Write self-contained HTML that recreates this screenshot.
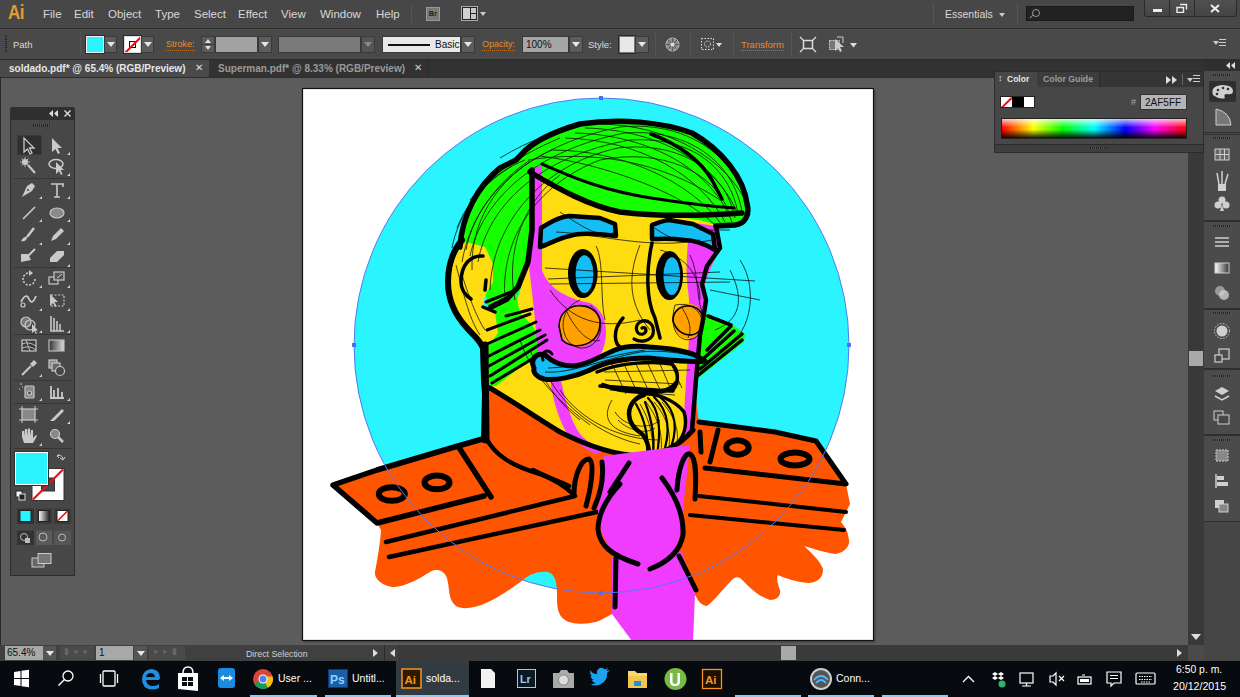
<!DOCTYPE html>
<html><head><meta charset="utf-8">
<style>
*{margin:0;padding:0;box-sizing:border-box}
html,body{width:1240px;height:697px;overflow:hidden;background:#5c5c5c;font-family:"Liberation Sans",sans-serif;}
.a{position:absolute}
.t{position:absolute;white-space:nowrap}
#menubar{left:0;top:0;width:1240px;height:29px;background:#474747;border-bottom:1px solid #2b2b2b}
.mi{position:absolute;top:8px;font-size:11.5px;color:#d8d8d8}
#ctrl{left:0;top:29px;width:1240px;height:31px;background:#494949;border-top:1px solid #505050;border-bottom:1px solid #2b2b2b}
.dd{position:absolute;background:#5c5c5c;border:1px solid #3a3a3a}
.dd:after{content:"";position:absolute;left:50%;top:50%;margin-left:-4px;margin-top:-2px;border-left:4px solid transparent;border-right:4px solid transparent;border-top:5px solid #e6e6e6}
.dd.g:after{border-top-color:#8a8a8a}
.sep{position:absolute;width:1px;background:#3a3a3a;border-right:1px solid #555}
.or{color:#e8892b;border-bottom:1px dotted #c07020}
#tabs{left:0;top:60px;width:1204px;height:17px;background:#323232}
#canvas{left:0;top:77px;width:1188px;height:568px;background:#5c5c5c}
#status{left:0;top:645px;width:1240px;height:16px;background:#404040}
#taskbar{left:0;top:661px;width:1240px;height:36px;background:#070a0e}
.tool{position:absolute;width:18px;height:18px}
.dock{position:absolute;left:1204px;width:36px;background:#4b4b4b;border-top:1px solid #2f2f2f;border-bottom:1px solid #2f2f2f}
.grip{position:absolute;height:3px;background:repeating-linear-gradient(90deg,#222 0 1px,#555 1px 2px)}
</style></head><body>
<div id="menubar" class="a">
  <div class="t" style="left:8px;top:1px;font-size:20px;font-weight:bold;color:#e39c30;letter-spacing:-0.5px;transform:scale(0.85,1);transform-origin:0 0">Ai</div>
  <div class="mi" style="left:43px">File</div>
  <div class="mi" style="left:74px">Edit</div>
  <div class="mi" style="left:108px">Object</div>
  <div class="mi" style="left:155px">Type</div>
  <div class="mi" style="left:194px">Select</div>
  <div class="mi" style="left:238px">Effect</div>
  <div class="mi" style="left:281px">View</div>
  <div class="mi" style="left:320px">Window</div>
  <div class="mi" style="left:376px">Help</div>
  <div class="sep" style="left:411px;top:5px;height:18px"></div>
  <div class="a" style="left:426px;top:7px;width:14px;height:14px;background:#7a7a7a;border:1px solid #999;font-size:7.5px;font-weight:bold;color:#222;text-align:center;line-height:12px">Br</div>
  <svg class="a" style="left:461px;top:6px" width="18" height="16"><rect x="0.5" y="0.5" width="16" height="14" fill="#222" stroke="#aaa"/><rect x="2" y="2" width="7" height="11" fill="#d0d0d0"/><rect x="10" y="2" width="5" height="5" fill="#c8c8c8"/><rect x="10" y="8" width="5" height="5" fill="#c8c8c8"/></svg>
  <div class="a" style="left:480px;top:12px;border-left:3px solid transparent;border-right:3px solid transparent;border-top:4px solid #ccc"></div>
  <div class="sep" style="left:933px;top:3px;height:22px"></div>
  <div class="mi" style="left:945px;font-size:10.5px;top:8px">Essentials</div>
  <div class="a" style="left:999px;top:13px;border-left:3px solid transparent;border-right:3px solid transparent;border-top:4px solid #ccc"></div>
  <div class="sep" style="left:1017px;top:3px;height:22px"></div>
  <div class="a" style="left:1026px;top:6px;width:108px;height:15px;background:#222;border:1px solid #1a1a1a">
    <div class="a" style="left:5px;top:2px;width:8px;height:8px;border:1px solid #999;border-radius:50%"></div>
    <div class="a" style="left:2px;top:9px;width:5px;height:1px;background:#999;transform:rotate(-45deg)"></div>
  </div>
  <div class="a" style="left:1144px;top:0;width:93px;height:17px;background:linear-gradient(#505050,#444);border:1px solid #2a2a2a;border-top:0;border-radius:0 0 3px 3px"></div>
  <div class="a" style="left:1169px;top:0;width:1px;height:16px;background:#2a2a2a"></div>
  <div class="a" style="left:1194px;top:0;width:1px;height:16px;background:#2a2a2a"></div>
  <div class="a" style="left:1153px;top:9px;width:9px;height:3px;background:#eee"></div>
  <svg class="a" style="left:1176px;top:3px" width="12" height="10"><path d="M4 1.5h6.5v5M1 4.5h6.5v5h-6.5z" fill="none" stroke="#eee" stroke-width="1.4"/></svg>
  <svg class="a" style="left:1210px;top:4px" width="10" height="9"><path d="M1 1 L9 8 M9 1 L1 8" stroke="#eee" stroke-width="2"/></svg>
</div>
<div id="ctrl" class="a"><div class="a" style="left:0;top:-1.5px;width:1240px;height:30px">
  <div class="a" style="left:5px;top:6px;width:2px;height:17px;background:repeating-linear-gradient(180deg,#222 0 1px,#4a4a4a 1px 2px)"></div>
  <div class="t" style="left:13px;top:10px;font-size:9.5px;color:#dadada">Path</div>
  <div class="sep" style="left:80px;top:3px;height:24px"></div>
  <div class="a" style="left:86px;top:7px;width:18px;height:17px;background:#2af5ff;border:1px solid #f0f0f0;outline:1px solid #2a2a2a"></div>
  <div class="dd" style="left:104px;top:7px;width:13px;height:17px"></div>
  <div class="a" style="left:124px;top:7px;width:17px;height:17px;background:#fff;border:1px solid #ddd;outline:1px solid #2a2a2a;overflow:hidden">
    <div class="a" style="left:4px;top:4px;width:7px;height:7px;border:1px solid #111"></div>
    <div class="a" style="left:-3px;top:7px;width:22px;height:2px;background:#e01010;transform:rotate(-45deg)"></div>
  </div>
  <div class="dd" style="left:141px;top:7px;width:13px;height:17px"></div>
  <div class="t or" style="left:166px;top:10px;font-size:9px;line-height:11px">Stroke:</div>
  <div class="a" style="left:201px;top:7px;width:14px;height:17px;background:#5a5a5a;border:1px solid #3a3a3a">
    <div class="a" style="left:3px;top:2px;border-left:3px solid transparent;border-right:3px solid transparent;border-bottom:4px solid #ddd"></div>
    <div class="a" style="left:0;top:7px;width:12px;height:1px;background:#3a3a3a"></div>
    <div class="a" style="left:3px;top:9px;border-left:3px solid transparent;border-right:3px solid transparent;border-top:4px solid #ddd"></div>
  </div>
  <div class="a" style="left:215px;top:7px;width:43px;height:17px;background:#a2a2a2;border:1px solid #3a3a3a"></div>
  <div class="dd" style="left:258px;top:7px;width:14px;height:17px"></div>
  <div class="a" style="left:278px;top:7px;width:83px;height:17px;background:#7a7a7a;border:1px solid #3a3a3a"></div>
  <div class="dd g" style="left:361px;top:7px;width:14px;height:17px;background:#555"></div>
  <div class="a" style="left:382px;top:7px;width:79px;height:17px;background:#e8e8e8;border:1px solid #3a3a3a">
    <div class="a" style="left:5px;top:7px;width:42px;height:2px;background:#111"></div>
    <div class="t" style="left:52px;top:2px;font-size:10px;color:#111">Basic</div>
  </div>
  <div class="dd" style="left:461px;top:7px;width:14px;height:17px"></div>
  <div class="t or" style="left:482px;top:10px;font-size:9px;line-height:11px">Opacity:</div>
  <div class="a" style="left:522px;top:7px;width:47px;height:17px;background:#a6a6a6;border:1px solid #3a3a3a"><div class="t" style="left:3px;top:2px;font-size:10px;color:#111">100%</div></div>
  <div class="dd" style="left:569px;top:7px;width:14px;height:17px"></div>
  <div class="t" style="left:588px;top:10px;font-size:9.5px;color:#dadada">Style:</div>
  <div class="a" style="left:619px;top:7px;width:16px;height:17px;background:#e8e8e8;border:1px solid #777;outline:1px solid #2a2a2a"></div>
  <div class="dd" style="left:635px;top:7px;width:14px;height:17px"></div>
  <div class="sep" style="left:655px;top:3px;height:24px"></div>
  <svg class="a" style="left:664px;top:7px" width="18" height="17"><circle cx="8.5" cy="8.5" r="6.5" fill="#8a8a8a" stroke="#bbb" stroke-width="1"/><path d="M8.5 2v13M2 8.5h13M4 4l9 9M13 4l-9 9" stroke="#5a5a5a" stroke-width="1"/><circle cx="8.5" cy="8.5" r="2" fill="#ddd"/></svg>
  <div class="sep" style="left:690px;top:3px;height:24px"></div>
  <svg class="a" style="left:700px;top:7px" width="24" height="17"><rect x="1.5" y="2.5" width="12" height="11" fill="none" stroke="#ddd" stroke-dasharray="1.5 1.5"/><circle cx="7.5" cy="8" r="3" fill="none" stroke="#ddd" stroke-dasharray="1.5 1"/><path d="M16 7h6l-3 4z" fill="#ddd"/></svg>
  <div class="sep" style="left:733px;top:3px;height:24px"></div>
  <div class="t or" style="left:741px;top:10px;font-size:9.5px;line-height:11px">Transform</div>
  <div class="sep" style="left:791px;top:3px;height:24px"></div>
  <svg class="a" style="left:799px;top:7px" width="18" height="17"><rect x="4.5" y="4.5" width="9" height="8" fill="none" stroke="#ddd" stroke-width="1.5"/><path d="M1 1l3 3M17 1l-3 3M1 16l3-3M17 16l-3-3" stroke="#ddd" stroke-width="1.2"/></svg>
  <svg class="a" style="left:827px;top:6px" width="32" height="18"><rect x="2.5" y="5.5" width="10" height="9" fill="#777" stroke="#ccc" stroke-dasharray="2 1"/><path d="M8 4 L8 16 L11 13 L13 17 L15 16 L13 12 L17 12Z" fill="#ccc"/><path d="M10 2l6 0M16 2l0 6" stroke="#ccc" stroke-width="1"/><path d="M23 8h7l-3.5 4.5z" fill="#ddd"/></svg>
  <div class="a" style="left:1213px;top:12px;border-left:3px solid transparent;border-right:3px solid transparent;border-top:4px solid #ccc"></div>
  <div class="a" style="left:1219px;top:10px;width:7px;height:9px;background:repeating-linear-gradient(180deg,#ccc 0 1px,transparent 1px 3px)"></div>
</div></div>
<div id="tabs" class="a">
  <div class="a" style="left:0;top:0;width:209px;height:17px;background:#4a4a4a"></div>
  <div class="t" style="left:9px;top:3px;font-size:10px;font-weight:bold;color:#e6e6e6">soldado.pdf* @ 65.4% (RGB/Preview)</div>
  <div class="t" style="left:195px;top:2px;font-size:10px;color:#ddd">&#x2715;</div>
  <div class="t" style="left:218px;top:3px;font-size:10px;font-weight:bold;color:#9a9a9a">Superman.pdf* @ 8.33% (RGB/Preview)</div>
  <div class="t" style="left:414px;top:2px;font-size:10px;color:#ccc">&#x2715;</div>
  <div class="a" style="left:427px;top:0;width:1px;height:17px;background:#2a2a2a"></div>
</div>
<div class="a" style="left:1204px;top:60px;width:36px;height:10px;background:#2f2f2f"><svg class="a" style="left:22px;top:2px" width="10" height="7"><path d="M4 0 L0 3.5 L4 7Z M9 0 L5 3.5 L9 7Z" fill="#ddd"/></svg></div>
<div id="canvas" class="a"><div class="a" style="left:0;top:0;width:1188px;height:1px;background:#2e2e2e"></div><div class="a" style="left:0;top:0;width:1px;height:568px;background:#2a2a2a"></div></div>
<div class="a" style="left:304px;top:90px;width:572px;height:553px;background:#4d4d4d"></div>
<svg class="a" style="left:295px;top:80px" width="590" height="565" viewBox="295 80 590 565">
<defs><clipPath id="ab"><rect x="303" y="89" width="570" height="551"/></clipPath></defs>
<rect x="302.5" y="88.5" width="571" height="552" fill="#fff" stroke="#111" stroke-width="1.2"/>
<g clip-path="url(#ab)">
 <circle cx="601.5" cy="345.5" r="247.5" fill="#2af5ff"/>
 <!-- orange jacket -->
 <path fill="#ff5400" d="M486 388 L484 438 L458 446 L377 470 L333 485 L377 523 L381 530 C380 545 378 555 375 572 C374 580 385 587 394 587 C405 587 420 578 430 572 C436 568 444 570 447 578 C450 590 448 600 456 606 C462 610 475 608 486 603 C500 597 512 588 523 580 C530 574 538 571 548 572 C556 574 557 585 557 595 C557 605 557 615 565 620 C572 625 590 625 601 620 L612 614 L695 595 C698 600 700 605 707 606 C715 600 722 590 730 582 C733 578 737 576 740 578 C748 585 755 595 770 600 C778 600 781 595 780 590 C778 585 776 578 778 575 C785 578 795 582 809 583 C818 582 823 578 823 569 C820 560 810 552 804 546 C812 548 825 553 836 554 C846 552 850 545 849 540 C848 532 846 528 841 522 L850 504 L846 484 L816 441 L775 432 L699 422 L696 400 L640 420 Z"/>
 <!-- tie lower -->
 <path fill="#ef3cff" d="M612 558 L682 552 L695 593 L693 641 L632 641 L612 614 Z"/>
 <!-- green hair + sideburn + hatch -->
 <path fill="#16ff00" d="M460 247 C462 215 478 186 500 168 L516 160 L520 156 C528 146 546 134 580 124 C620 118 662 122 692 133 C722 150 744 178 747 204 C750 215 745 224 735 225 L716 228 L700 240 L600 240 L540 270 L521 288 L516 300 L487 300 L485 290 Z"/>
 <path fill="#16ff00" d="M706 314 L731 324 L745 334 L744 342 L696 380 L700 340 Z"/>
 <!-- face yellow -->
 <path fill="#ffdc10" d="M533 168 C560 190 590 206 620 212 C660 217 700 216 716 226 L720 248 L709 272 L702 292 L706 315 L700 335 L695 380 L692 430 C680 445 660 456 640 456 C610 455 580 440 560 432 C530 415 505 400 490 388 L521 288 L527 266 L533 230 Z"/>
 <path fill="#16ff00" d="M487 285 L516 280 L516 295 L520 313 L532 325 L544 344 L546 347 L496 386 L487 386 Z"/>
 <!-- ear -->
 <path fill="#ffdc10" d="M466 242 C455 252 449 266 449 282 C449 300 456 315 468 328 C475 336 482 343 490 344 L498 333 L495 312 L483 307 L485 295 L493 282 L493 264 L485 247 Z"/>
 <!-- magenta face -->
 <path fill="#f040ff" d="M531 170 L542 165 L542 270 C548 288 565 298 590 303 C600 308 606 318 606 332 C606 350 598 362 585 370 L560 376 C564 395 570 420 580 434 C588 442 596 448 602 452 L596 454 C584 448 572 440 565 430 C556 412 552 395 550 378 C546 374 542 370 539 362 C537 345 536 330 534 310 L529 266 L531 230 Z"/>
 <path fill="#f040ff" d="M688 222 L716 226 L720 248 L709 272 L702 292 L706 315 L700 335 L695 380 L692 432 L683 434 L686 380 C688 350 692 320 688 290 C684 260 690 240 688 222 Z"/>
 <!-- eyebrows -->
 <path fill="#15bdf5" d="M540 247 L541 228 C552 221 563 216 570 216 L600 218 L615 224 L616 236 C600 234 580 232 570 236 C558 238 550 244 540 247 Z"/>
 <path fill="#15bdf5" d="M652 239 L652 225 C660 222 665 220 669 220 L693 224 L713 234 L715 250 C705 244 695 240 684 240 C670 238 660 239 652 239 Z"/>
 <!-- eyes -->
 <ellipse cx="582.8" cy="273.5" rx="14.8" ry="24.5" fill="#000"/><ellipse cx="584.5" cy="274.2" rx="8.9" ry="18.9" fill="#15bdf5"/>
 <ellipse cx="669.4" cy="275.5" rx="13.6" ry="24.5" fill="#000"/><ellipse cx="671.8" cy="276.1" rx="8.4" ry="18.9" fill="#15bdf5"/>
 <!-- cheeks -->
 <circle cx="579.5" cy="326" r="20.5" fill="#ffa200"/>
 <ellipse cx="688" cy="321" rx="15.5" ry="17.5" fill="#ffa200"/>
 <!-- sketch lines (thin) -->
 <g fill="none" stroke="#000" stroke-width="0.8" opacity="0.9">
  <path d="M466 250 C476 195 530 145 620 127 C690 120 738 160 746 205"/>
  <path d="M470 256 C482 200 535 150 625 133 C695 128 735 168 742 212"/>
  <path d="M478 262 C488 205 540 156 630 140 C700 136 732 176 738 214"/>
  <path d="M490 290 C492 225 540 165 618 148 C690 140 728 180 735 218"/>
  <path d="M505 300 C500 240 535 185 600 160 C660 148 715 170 730 215"/>
  <path d="M515 300 C505 250 525 200 560 175"/>
  <path d="M472 270 C470 215 505 170 552 150"/>
  <path d="M462 262 C470 215 500 180 530 160"/>
  <path d="M565 138 C640 140 700 175 725 222"/>
  <path d="M575 133 C650 135 712 170 732 222"/>
  <path d="M585 128 C665 130 720 168 738 215"/>
  <path d="M552 150 C620 150 690 180 722 225"/>
  <path d="M540 156 C610 165 685 195 715 225"/>
  <path d="M600 124 C670 125 725 160 745 200"/>
  <path d="M528 160 C590 150 660 160 720 200"/>
  <path d="M545 268 L755 281"/>
  <path d="M548 279 L720 272"/>
  <path d="M550 284 L730 282"/>
  <path d="M556 232 C600 234 650 250 700 240"/>
  <path d="M560 212 C580 225 600 240 615 232 M655 228 C670 240 690 245 712 240"/>
  <path d="M580 300 C555 310 560 345 580 348 C600 350 610 320 590 305"/>
  <path d="M675 305 C700 300 710 325 695 338 C680 345 668 330 675 305"/>
  <path d="M566 310 C575 330 590 345 600 340 M682 308 C690 320 692 330 688 338"/>
  <path d="M550 290 C570 320 600 330 640 320"/>
  <path d="M640 245 C630 270 625 300 650 330"/>
  <path d="M596 246 C604 260 600 300 605 320"/>
  <path d="M690 255 C700 275 695 300 705 320"/>
  <path d="M660 250 C680 255 700 270 700 300"/>
  <path d="M560 390 C580 420 620 440 660 440"/>
  <path d="M550 380 C570 415 610 438 640 444"/>
  <path d="M612 400 C600 420 612 432 640 436 M615 412 C625 428 650 430 660 420 M618 420 C630 432 648 434 655 428"/>
  <path d="M604 372 L690 370 M605 380 L680 384 M610 390 L675 395"/>
  <path d="M612 364 L626 394 M624 364 L638 394 M636 364 L650 394 M648 364 L662 394 M660 364 L672 392 M672 366 L682 388"/>
  <path d="M640 404 C650 420 655 440 652 462 M646 402 C660 420 664 440 660 458 M654 402 C668 418 672 436 668 452 M662 402 C676 418 680 434 676 446"/>
  <path d="M740 260 C760 290 750 340 720 350"/>
  <path d="M730 270 C745 300 740 320 715 330"/>
  <path d="M456 265 C465 300 470 320 480 335 M462 275 C470 300 478 320 485 330"/>
  <path d="M530 350 C540 375 555 400 580 420"/>
  <path d="M520 340 C530 370 550 395 590 425"/>
  <path d="M710 290 L760 300 M700 230 L730 230"/>
  <path d="M457 228 C470 195 495 172 525 160 M452 248 C458 215 480 185 512 166 M500 158 C530 140 560 128 600 122 M470 200 C490 175 520 155 560 138"/>
 </g>
 <!-- mustache -->
 <path fill="#15bdf5" stroke="#000" stroke-width="5" stroke-linejoin="round" d="M534 368 C530 360 536 352 545 355 C552 362 562 366 574 366 C590 364 600 356 615 350 C625 346 640 346 650 347 C665 348 685 350 697 356 L705 361 C690 363 670 360 648 358 C625 358 605 362 590 370 C575 377 555 381 544 379 C536 377 533 372 534 368 Z"/><path fill="none" stroke="#000" stroke-width="0.8" d="M545 372 C570 374 600 360 640 352 C660 350 680 352 700 358 M548 368 C575 368 605 356 645 350"/>
 <!-- thick outlines -->
 <g fill="none" stroke="#000" stroke-linecap="round" stroke-linejoin="round">
  <path stroke-width="5.5" d="M460 247 C462 215 478 186 500 168 L516 160 L520 156 C528 146 546 134 580 124 C620 118 662 122 692 133 C722 150 744 178 747 204 C750 215 745 224 735 225 L716 226"/>
  <path stroke-width="5.5" d="M530 172 C560 190 590 206 620 212 C660 217 700 216 742 213"/>
  <path stroke-width="3" d="M542 164 C570 176 600 190 651 198 C690 204 720 207 734 208"/>
  <path stroke-width="3.5" d="M651 134 C680 145 700 160 712 180 L722 199"/>
  <path stroke-width="5.5" d="M532 170 L532 230 L528 262 L518 287 L507 299 L491 307"/>
  <path stroke-width="4.5" d="M716 226 L720 248 L707 266 L702 284 L706 300 L703 320 L700 335 L696 380 L692 430"/>
  <path stroke-width="6" d="M462 240 C452 252 448 266 448 282 C448 300 455 315 467 328 C473 335 480 340 483 348 L484 380 L485 394 L484 440"/><path stroke-width="7" d="M485 345 L486 440"/>
  <path stroke-width="3.5" d="M483 256 C470 255 461 265 461 282 C461 290 465 295 471 299 M486 280 L485 290 M483 307 L495 312"/>
  <path stroke-width="5.5" d="M486 438 L458 446 L377 470 L333 485 L377 523 L484 496 M458 446 L491 497"/>
  <path stroke-width="4.5" d="M386 542 L575 496 M389 557 L597 512"/>
  <path stroke-width="5" d="M699 422 L775 432 L816 441 L846 484 L705 468 M718 430 L710 462"/>
  <path stroke-width="4" d="M699 496 L846 512 M690 515 L844 530"/>
  <path stroke-width="5" d="M490 388 C520 406 540 420 560 432 C580 442 610 455 640 456 C660 456 680 445 693 430"/>
  <path stroke-width="4.5" d="M486 438 C495 455 510 465 540 474 C555 480 565 486 573 494 M533 470 C545 476 560 482 569 486"/>
  <path stroke-width="4.5" d="M540 247 L541 228 C552 221 563 216 570 216 L600 218 L615 224 L616 236 C600 234 580 232 570 236 C558 238 550 244 540 247 Z"/>
  <path stroke-width="4.5" d="M652 239 L652 225 C660 222 665 220 669 220 L693 224 L713 234 L715 250 C705 244 695 240 684 240 C670 238 660 239 652 239 Z"/>
  <path stroke-width="3.5" d="M652 243 C646 270 646 300 655 318 L660 338"/>
  <path stroke-width="3.2" d="M642 328 C646 326 648 332 643 334 C636 336 634 326 640 322 C648 318 655 325 653 334 C651 341 641 343 634 339"/>
  <path stroke-width="3.5" d="M623 318 C612 330 614 345 622 348"/>
  <path stroke-width="3" d="M486 302 L516 290 M506 316 L532 309 M487 330 L530 314 M487 344 L536 322 M487 357 L540 330 M489 366 L545 335 M490 376 L547 340 M492 383 L537 356"/>
  <path stroke-width="3.5" d="M708 316 L731 325 M731 326 L707 350 M734 331 L704 358 M742 334 L700 369 M742 340 L696 377"/>
  <path stroke-width="4.5" d="M644 395 C636 397 629 404 629 414 C629 424 636 430 642 434 C648 440 650 450 650 470"/>
  <path stroke-width="3.5" d="M640 394 C655 392 675 400 684 412 C688 425 684 438 673 448 L664 458"/><path stroke-width="2.2" d="M648 398 C660 410 662 430 656 460 M654 397 C668 410 672 430 662 458 M660 397 C676 410 680 428 668 455 M645 402 C652 420 656 440 652 462 M636 404 C645 420 650 440 646 458"/><path stroke-width="4.5" d="M603 385 C620 392 640 393 662 391 C670 390 674 386 676 383"/>
  <path stroke-width="3.5" d="M597 372 C620 362 655 361 672 364 C680 372 678 384 673 390 M600 386 C630 388 655 390 673 391"/>
  <path stroke-width="3" d="M543 360 C540 352 548 348 552 354"/>
  <path stroke-width="1.6" d="M559 326 C560 300 595 300 600 320 C602 345 575 352 562 340 Z M673 321 C672 303 700 300 703 318 C705 338 680 342 673 321"/>
 </g>
 <!-- epaulette circles -->
 <g fill="none" stroke="#000" stroke-width="6">
  <ellipse cx="391.8" cy="494" rx="13" ry="6.8"/><ellipse cx="437" cy="482.4" rx="12.5" ry="6.9"/>
  <ellipse cx="737.5" cy="447.5" rx="11.2" ry="7.2"/><ellipse cx="795" cy="459" rx="14.5" ry="6.5"/>
 </g>
 <!-- tie knot -->
 <path fill="#ef3cff" d="M604 456 L690 445 L684 500 C686 540 670 565 650 569 L638 564 C615 560 600 540 598 515 C598 490 603 470 604 456 Z"/>
 <g fill="none" stroke="#000" stroke-width="5" stroke-linecap="round">
  <path d="M620 484 C605 500 598 515 598 530 C600 545 610 555 638 564"/>
  <path d="M662 478 C675 495 684 515 683 535 C680 552 668 562 650 569"/>
  <path d="M629 463 L610 492 M574 494 C574 476 581 459 589 459 C595 462 591 488 586 506 M602 462 C604 478 600 495 594 508"/>
  <path d="M677 490 C678 470 684 452 690 454 C697 458 696 480 695 499 M700 432 L701 452"/>
  <path d="M616 558 L615 607 M679 556 L696 590"/>
 </g>
 <!-- selected path outline -->
 <circle cx="601.5" cy="345.5" r="247.5" fill="none" stroke="#5a78f0" stroke-width="1"/>
 <g fill="#4a70f0"><rect x="352" y="343" width="4" height="4"/><rect x="847" y="343" width="4" height="4"/><rect x="599" y="96" width="4" height="4"/><rect x="599" y="591" width="4" height="4"/></g>
</g>
</svg>
<div class="a" style="left:10px;top:107px;width:65px;height:469px;background:#474747;border:1px solid #2c2c2c;border-radius:3px 3px 0 0"></div>
<div class="a" style="left:10px;top:107px;width:65px;height:13px;background:#2f2f2f;border-radius:3px 3px 0 0"></div>
<svg class="a" style="left:49px;top:110px" width="10" height="7"><path d="M4 0 L0 3.5 L4 7Z M9 0 L5 3.5 L9 7Z" fill="#ddd"/></svg>
<svg class="a" style="left:64px;top:110px" width="7" height="7"><path d="M0.5 0.5 L6.5 6.5 M6.5 0.5 L0.5 6.5" stroke="#ddd" stroke-width="1.4"/></svg>
<div class="grip" style="left:33px;top:124px;width:18px"></div>
<div class="a" style="left:17px;top:135px;width:25px;height:20px;background:#2f2f2f;border:1px solid #3a3a3a"></div>
<svg class="a" style="left:0;top:0" width="80" height="580" viewBox="0 0 80 580">
<g fill="#c9c9c9" stroke="#c9c9c9" stroke-width="1.2">
 <!-- separators -->
 <g stroke="#353535" stroke-width="1"><line x1="14" y1="178.5" x2="72" y2="178.5"/><line x1="14" y1="267.5" x2="72" y2="267.5"/><line x1="14" y1="334.5" x2="72" y2="334.5"/><line x1="14" y1="380.5" x2="72" y2="380.5"/><line x1="14" y1="403.5" x2="72" y2="403.5"/><line x1="14" y1="448.5" x2="72" y2="448.5"/></g>
 <!-- selection -->
 <path d="M24 138 L24 152 L27.5 149 L30 154 L32 153 L29.5 148 L34 148 Z" fill="none" stroke-width="1.3"/>
 <path d="M52 138 L52 152 L55.5 149 L58 154 L60 153 L57.5 148 L62 148 Z" stroke="none"/>
 <!-- magic wand -->
 <path d="M28 165 L35 173" stroke-width="2"/><circle cx="25" cy="162" r="3" stroke="none"/><path d="M20 162h10M25 157v10M21.5 158.5l7 7M28.5 158.5l-7 7" stroke-width="0.8"/>
 <!-- lasso -->
 <ellipse cx="56" cy="164" rx="7" ry="4.5" fill="none" stroke-width="1.5"/><path d="M56 162 L56 174 L59 171 L61 175 L62.5 174 L60.5 170 L64 170 Z" stroke="none"/>
 <!-- pen -->
 <path d="M22 197 L27 186 L32 183 L35 186 L32 191 Z" stroke="none"/><circle cx="28" cy="190" r="1" fill="#474747" stroke="none"/>
 <!-- type T -->
 <path d="M51 184h12v3M57 184v13M54 197h6" fill="none" stroke-width="1.6"/>
 <!-- line -->
 <path d="M23 219 L35 207" stroke-width="1.6"/>
 <!-- ellipse -->
 <ellipse cx="57" cy="213" rx="7" ry="5" fill="#8a8a8a" stroke="#c9c9c9"/>
 <!-- brush -->
 <path d="M34 228 L27 237" stroke-width="2.5"/><path d="M21 241 Q24 236 27 237 Q27 242 21 241Z" stroke="none"/>
 <!-- pencil -->
 <path d="M51 241 L53 236 L61 228 L64 231 L56 239 Z" stroke="none"/>
 <!-- blob brush -->
 <path d="M21 254 L28 254 L31 260 L21 262 Z" stroke="none"/><path d="M28 256 L35 249" stroke-width="2"/>
 <!-- eraser -->
 <path d="M50 258 L57 251 L64 251 L64 255 L57 262 L50 262 Z" stroke="none"/>
 <!-- rotate -->
 <path d="M35 279 A6 6 0 1 1 29 273" fill="none" stroke-dasharray="2 1.5" stroke-width="1.6"/><path d="M29 270 L33 273 L29 276Z" stroke="none"/>
 <!-- scale -->
 <rect x="49" y="277" width="9" height="7" fill="none"/><rect x="54" y="272" width="10" height="8" fill="#555"/><path d="M57 278 L62 274" stroke-width="1"/>
 <!-- warp -->
 <path d="M21 302 Q26 292 29 299 Q32 306 36 296" fill="none" stroke-width="1.8"/><circle cx="23" cy="305" r="2" fill="none"/>
 <!-- free transform -->
 <rect x="51" y="295" width="13" height="11" fill="none" stroke-dasharray="2 1.5"/><path d="M50 294 L50 306 L53 303 L55 307 L56.5 306 L54.5 302 L58 302Z" stroke="none"/>
 <!-- shape builder -->
 <circle cx="26" cy="322" r="5" fill="#777"/><circle cx="30" cy="325" r="5" fill="none"/><path d="M32 324 L32 333 L34.5 331 L36 334 L37 333.5 L35.5 330.5 L38 330.5Z" stroke="none"/>
 <!-- perspective grid -->
 <path d="M51 316 L51 331 L64 331 M54 318 L54 331 M57 321 L57 331 M60 324 L60 331" fill="none" stroke-width="1.6"/>
 <!-- mesh -->
 <rect x="22" y="340" width="14" height="11" fill="#3a3a3a"/><path d="M22 344 Q29 341 36 346 M26 340 Q28 346 30 351 M22 348 Q30 345 36 350" fill="none" stroke-width="0.9"/>
 <!-- gradient -->
 <rect x="49" y="340" width="15" height="11" fill="url(#tg)" stroke="#bbb"/>
 <!-- eyedropper -->
 <path d="M22 375 L31 366" stroke-width="2"/><path d="M30 364 L34 360 L37 363 L33 367Z" stroke="none"/>
 <!-- blend -->
 <rect x="49" y="360" width="8" height="8" fill="#888"/><rect x="52" y="363" width="8" height="8" fill="#666"/><circle cx="60" cy="371" r="4.5" fill="#474747"/>
 <!-- symbol sprayer -->
 <rect x="25" y="386" width="9" height="12" rx="1" fill="#888"/><circle cx="29.5" cy="393" r="2" fill="#474747"/><path d="M20 384h2M22 387h1M19 389h1" stroke-width="1"/>
 <!-- column graph -->
 <path d="M50 398h14M51 386v12M54 390v8M58 388v10M62 392v6" fill="none" stroke-width="1.8"/>
 <!-- artboard -->
 <rect x="22" y="409" width="13" height="11" fill="#888" stroke="#c9c9c9"/><path d="M19 409h3M35 409h3M19 420h3M35 420h3M22 406v3M35 406v3M22 420v3M35 420v3" stroke-width="1"/>
 <!-- slice -->
 <path d="M50 421 L62 409 L64 411 L54 421 Z" stroke="none"/>
 <!-- hand -->
 <path d="M22 437 L22 431 L24 431 L24 436 L25 429 L27 429 L27 436 L28 428.5 L30 428.5 L30 436 L31 430 L33 430 L33 438 L36 435 L37 436 L33 443 L24 443 Z" stroke="none"/>
 <!-- zoom -->
 <circle cx="55" cy="434" r="4.5" fill="#888"/><path d="M58 437 L63 442" stroke-width="2.5"/>
 <!-- corner tri markers -->
 <g stroke="none" fill="#cfcfcf">
  <path d="M67 155h3v-3Z M67 176h3v-3Z M39 199h3v-3Z M67 199h3v-3Z M39 222h3v-3Z M67 222h3v-3Z M39 245h3v-3Z M67 245h3v-3Z M67 267h3v-3Z M39 288h3v-3Z M67 288h3v-3Z M39 311h3v-3Z M67 311h3v-3Z M39 333h3v-3Z M67 333h3v-3Z M39 377h3v-3Z M39 401h3v-3Z M67 401h3v-3Z M67 424h3v-3Z M39 446h3v-3Z"/>
 </g>
</g>
<defs><linearGradient id="tg"><stop offset="0" stop-color="#333"/><stop offset="1" stop-color="#ddd"/></linearGradient></defs>
 <!-- fill/stroke -->
 <rect x="32" y="468.5" width="32" height="32" fill="#fff" stroke="#333"/>
 <rect x="41.5" y="478" width="13" height="13" fill="#474747" stroke="#333"/>
 <line x1="33" y1="499.5" x2="63" y2="469.5" stroke="#e81010" stroke-width="2.2"/>
 <rect x="15.5" y="452.5" width="32" height="32" fill="#2af5ff" stroke="#fff" stroke-width="1"/>
 <rect x="14.5" y="451.5" width="34" height="34" fill="none" stroke="#2f2f2f" stroke-width="1"/>
 <path d="M57 456 Q62 454 63 459 M60 458l3 2 2-3 M57 456l2-2 M57 456l2 2" fill="none" stroke="#ccc" stroke-width="1"/>
 <rect x="16" y="491" width="6" height="6" fill="#fff" stroke="#222"/><rect x="19" y="494" width="6" height="6" fill="#222" stroke="#ddd"/>
 <!-- modes -->
 <rect x="17" y="508.5" width="17" height="15.5" fill="#333"/><rect x="36" y="508.5" width="16" height="15.5" fill="#3a3a3a"/><rect x="54" y="508.5" width="17" height="15.5" fill="#3a3a3a"/>
 <rect x="20" y="510.5" width="11" height="11" fill="#2af5ff" stroke="#222"/>
 <rect x="38.5" y="510.5" width="11" height="11" fill="url(#tg2)" stroke="#222"/>
 <rect x="57" y="510.5" width="11" height="11" fill="#fff" stroke="#222"/><line x1="57.5" y1="521" x2="67.5" y2="511" stroke="#e81010" stroke-width="1.6"/>
 <defs><linearGradient id="tg2"><stop offset="0" stop-color="#fff"/><stop offset="1" stop-color="#222"/></linearGradient></defs>
 <rect x="17" y="530.5" width="17" height="14.5" fill="#333"/><rect x="36" y="530.5" width="16" height="14.5" fill="#5a5a5a"/><rect x="54" y="530.5" width="17" height="14.5" fill="#555"/>
 <circle cx="24" cy="537" r="3.5" fill="none" stroke="#bbb"/><rect x="25" y="538" width="5" height="5" fill="#bbb"/>
 <circle cx="43" cy="537" r="4" fill="none" stroke="#bbb"/><circle cx="62" cy="537.5" r="3.5" fill="none" stroke="#bbb"/>
 <rect x="32" y="558" width="12" height="9" fill="#666" stroke="#ccc"/><rect x="38" y="553.5" width="13" height="10" fill="#777" stroke="#ccc"/>
</svg>
<!-- color panel -->
<div class="a" style="left:994px;top:71px;width:210px;height:82px;background:#474747;border:1px solid #2c2c2c"></div>
<div class="a" style="left:995px;top:72px;width:208px;height:15px;background:#353535"></div>
<div class="a" style="left:995px;top:72px;width:42px;height:15px;background:#474747"></div>
<div class="a" style="left:1037px;top:72px;width:63px;height:15px;background:#3c3c3c;border-right:1px solid #2a2a2a"></div>
<div class="t" style="left:998px;top:73px;font-size:9px;color:#ddd">&#x2195;</div>
<div class="t" style="left:1007px;top:74px;font-size:8.5px;font-weight:bold;color:#e6e6e6">Color</div>
<div class="t" style="left:1043px;top:74px;font-size:8.75px;font-weight:bold;color:#9d9d9d">Color Guide</div>
<svg class="a" style="left:1166px;top:76px" width="11" height="8"><path d="M0 0 L5 4 L0 8Z M6 0 L11 4 L6 8Z" fill="#ddd"/></svg>
<div class="a" style="left:1182px;top:74px;width:1px;height:11px;background:#666"></div>
<div class="a" style="left:1187px;top:78px;border-left:3px solid transparent;border-right:3px solid transparent;border-top:4px solid #ccc"></div>
<div class="a" style="left:1193px;top:75px;width:7px;height:9px;background:repeating-linear-gradient(180deg,#ccc 0 1px,transparent 1px 3px)"></div>
<div class="a" style="left:1000px;top:96px;width:35px;height:12px;border:1px solid #222;overflow:hidden;background:linear-gradient(90deg,#fff 0 11px,#000 11px 23px,#fff 23px)">
  <div class="a" style="left:-2px;top:5px;width:15px;height:2px;background:#e81010;transform:rotate(-45deg)"></div>
</div>
<div class="t" style="left:1131px;top:97px;font-size:9px;color:#aaa">#</div>
<div class="a" style="left:1140px;top:94px;width:47px;height:16px;background:#b4b4b4;border:1px solid #333"><div class="t" style="left:4px;top:2px;font-size:10px;color:#111">2AF5FF</div></div>
<div class="a" style="left:1001px;top:118px;width:186px;height:21px;border:1px solid #222;background:linear-gradient(180deg,rgba(255,255,255,.75) 0,rgba(255,255,255,0) 45%,rgba(0,0,0,0) 55%,rgba(0,0,0,.9) 100%),linear-gradient(90deg,#f00 0,#ff0 17%,#0f0 33%,#0ff 50%,#00f 67%,#f0f 83%,#f00 100%)"></div>
<div class="a" style="left:995px;top:144px;width:208px;height:8px;background:#3e3e3e;border-top:1px solid #2a2a2a"></div>
<div class="grip" style="left:1090px;top:147px;width:17px;height:2px"></div>
<!-- vertical scrollbar -->
<div class="a" style="left:1188px;top:153px;width:16px;height:492px;background:#393939"></div>
<div class="a" style="left:1189px;top:351px;width:14px;height:15px;background:#a9a9a9"></div>
<div class="a" style="left:1191px;top:634px;border-left:5px solid transparent;border-right:5px solid transparent;border-top:6px solid #ddd"></div>
<!-- dock -->
<div class="a" style="left:1204px;top:70px;width:36px;height:575px;background:#464646"></div>
<div class="dock" style="top:70px;height:63px"></div>
<div class="dock" style="top:134px;height:87px"></div>
<div class="dock" style="top:221px;height:88px"></div>
<div class="dock" style="top:309px;height:60px"></div>
<div class="dock" style="top:369px;height:66px"></div>
<div class="dock" style="top:435px;height:87px"></div>
<div class="grip" style="left:1213px;top:74px;width:18px;height:2px"></div>
<div class="grip" style="left:1213px;top:137px;width:18px;height:2px"></div>
<div class="grip" style="left:1213px;top:225px;width:18px;height:2px"></div>
<div class="grip" style="left:1213px;top:312px;width:18px;height:2px"></div>
<div class="grip" style="left:1213px;top:375px;width:18px;height:2px"></div>
<div class="grip" style="left:1213px;top:439px;width:18px;height:2px"></div>
<div class="a" style="left:1209px;top:81px;width:27px;height:21px;background:#2f2f2f;border-radius:2px"></div>
<svg class="a" style="left:1204px;top:70px" width="36" height="460" viewBox="1204 70 36 460">
<g fill="#cfcfcf" stroke="#cfcfcf">
 <path d="M1213 95 Q1210 86 1222 85 Q1233 85 1233 91 Q1233 95 1227 94 Q1223 94 1225 98 Q1220 100 1213 95Z" stroke="none"/>
 <circle cx="1218" cy="90" r="1.3" fill="#2f2f2f" stroke="none"/><circle cx="1223" cy="88" r="1.3" fill="#2f2f2f" stroke="none"/><circle cx="1228" cy="89" r="1.3" fill="#2f2f2f" stroke="none"/><circle cx="1217" cy="94" r="1.3" fill="#2f2f2f" stroke="none"/>
 <path d="M1216 109 L1216 125 L1231 125 Q1230 112 1216 109Z" fill="#777" stroke="#cfcfcf"/>
 <rect x="1215" y="149" width="14" height="11" fill="#666" stroke="#cfcfcf"/><path d="M1215 154.5h14M1220 149v11M1224.5 149v11" stroke="#cfcfcf" stroke-width="1"/>
 <path d="M1218 184 h8 v7 h-8Z" stroke="none"/><path d="M1219 184 L1217 173 M1222 184 L1222 171 M1225 184 L1228 174" stroke-width="1.5"/>
 <circle cx="1222" cy="200" r="3.5" stroke="none"/><circle cx="1218" cy="205" r="3.5" stroke="none"/><circle cx="1226" cy="205" r="3.5" stroke="none"/><path d="M1222 205 L1220 211 h4Z" stroke="none"/>
 <path d="M1215 238h14M1215 242h14M1215 246h14" stroke-width="1.6"/>
 <rect x="1215" y="263" width="14" height="10" fill="url(#dg)" stroke="#cfcfcf"/>
 <circle cx="1220" cy="291" r="5" fill="#999" stroke="none"/><circle cx="1224" cy="295" r="5" fill="#cfcfcf" stroke="none" opacity=".8"/>
 <circle cx="1222" cy="331" r="5.5" fill="#cfcfcf" stroke="none"/><circle cx="1222" cy="331" r="7.5" fill="none" stroke-dasharray="1.5 1.5" stroke-width="1"/>
 <rect x="1219" y="349" width="10" height="10" fill="none" stroke-width="1.2"/><rect x="1215" y="355" width="7" height="7" fill="#474747" stroke-width="1.2"/>
 <path d="M1215 391 L1222 387 L1229 391 L1222 395Z" stroke="none"/><path d="M1215 396 L1222 400 L1229 396" fill="none" stroke-width="1.5"/>
 <rect x="1214" y="411" width="9" height="9" fill="none"/><rect x="1218" y="415" width="11" height="9" fill="#474747"/>
 <rect x="1216" y="450" width="12" height="11" fill="#888" stroke-dasharray="2 1"/>
 <path d="M1216 474 v14" stroke-width="1.5"/><rect x="1217" y="476" width="7" height="4" stroke="none"/><rect x="1217" y="482" width="11" height="4" stroke="none"/>
 <rect x="1215" y="500" width="9" height="8" fill="#cfcfcf" stroke="none"/><rect x="1219" y="504" width="9" height="8" fill="#888" stroke="#cfcfcf"/>
</g>
<defs><linearGradient id="dg"><stop offset="0" stop-color="#fff"/><stop offset="1" stop-color="#333"/></linearGradient></defs>
</svg>
<!-- status bar -->
<div id="status" class="a">
  <div class="a" style="left:5px;top:1px;width:38px;height:14px;background:#a8a8a8"><div class="t" style="left:2px;top:1px;font-size:10px;color:#111">65.4%</div></div>
  <div class="dd" style="left:43px;top:1px;width:13px;height:14px;border:0;background:#555"></div>
  <div class="a" style="left:60px;top:1px;width:34px;height:14px;background:#4a4a4a"></div>
  <div class="t" style="left:64px;top:1px;font-size:9px;color:#666;letter-spacing:4px">&#x25AE;&#x25C2;&#x25C2;</div>
  <div class="a" style="left:96px;top:1px;width:37px;height:14px;background:#a8a8a8"><div class="t" style="left:3px;top:1px;font-size:10px;color:#111">1</div></div>
  <div class="dd" style="left:134px;top:1px;width:13px;height:14px;border:0;background:#555"></div>
  <div class="a" style="left:149px;top:1px;width:36px;height:14px;background:#4a4a4a"></div>
  <div class="t" style="left:154px;top:1px;font-size:9px;color:#666;letter-spacing:4px">&#x25B8;&#x25B8;&#x25AE;</div>
  <div class="t" style="left:246px;top:4px;font-size:8.8px;color:#d0d0d0">Direct Selection</div>
  <div class="a" style="left:373px;top:4px;border-top:4px solid transparent;border-bottom:4px solid transparent;border-left:5px solid #ddd"></div>
  <div class="a" style="left:384px;top:0;width:1px;height:16px;background:#2a2a2a"></div>
  <div class="a" style="left:390px;top:4px;border-top:4px solid transparent;border-bottom:4px solid transparent;border-right:5px solid #ddd"></div>
  <div class="a" style="left:398px;top:0;width:790px;height:16px;background:#3a3a3a"></div>
  <div class="a" style="left:781px;top:1px;width:15px;height:14px;background:#a9a9a9"></div>
  <div class="a" style="left:1177px;top:4px;border-top:4px solid transparent;border-bottom:4px solid transparent;border-left:5px solid #ddd"></div>
  <div class="a" style="left:1188px;top:0;width:16px;height:16px;background:#4a4a4a"></div>
  <div class="a" style="left:1204px;top:0;width:36px;height:16px;background:#464646"></div>
</div>
<div id="taskbar" class="a">
<svg class="a" style="left:0;top:0" width="1240" height="36" viewBox="0 661 1240 36">
 <!-- windows logo -->
 <g fill="#fff"><path d="M14 672 L20.5 671 L20.5 678 L14 678Z M21.5 670.8 L29 669.8 L29 678 L21.5 678Z M14 679 L20.5 679 L20.5 686 L14 685Z M21.5 679 L29 679 L29 687.2 L21.5 686.2Z"/></g>
 <!-- search -->
 <circle cx="68" cy="676" r="5" fill="none" stroke="#fff" stroke-width="1.3"/><line x1="64.5" y1="679.5" x2="58.5" y2="685.5" stroke="#fff" stroke-width="1.5"/>
 <!-- task view -->
 <rect x="103" y="671" width="12" height="15" rx="1" fill="none" stroke="#fff" stroke-width="1.3"/><path d="M100.5 674v9M117.5 674v9" stroke="#fff" stroke-width="1.3"/>
 <!-- edge -->
 <path d="M159 680 L146 680 Q147 686 153 686 Q157 686 159 684 L159 688 Q156 689.5 152 689.5 Q142 689 142 679 Q143 669 152 669 Q160 670 160 678 Z M146 677 L155 677 Q154 673 151 673 Q147 673 146 677Z" fill="#1e8fe0" fill-rule="evenodd"/>
 <!-- store -->
 <path d="M178 673 L198 673 L198 691 L178 689Z" fill="#fff"/><path d="M183 673 Q183 667 188 667 Q193 667 193 673" fill="none" stroke="#fff" stroke-width="1.5"/>
 <path d="M182 677h5v4h-5Z M188 677h5v4h-5Z M182 682h5v4h-5Z M188 682h5v4h-5Z" fill="#070a0e"/>
 <!-- teamviewer -->
 <rect x="218" y="668" width="17" height="20" rx="3" fill="#1a8be0"/><path d="M220 678 L224 675 L224 677 L229 677 L229 675 L233 678 L229 681 L229 679 L224 679 L224 681Z" fill="#fff"/>
 <!-- active app bgs -->
 <rect x="396" y="661" width="73" height="36" fill="#323a42"/>
 <rect x="250" y="695" width="67" height="2" fill="#8fc8f0"/>
 <rect x="325" y="695" width="66" height="2" fill="#8fc8f0"/>
 <rect x="396" y="695" width="73" height="2" fill="#8fc8f0"/>
 <rect x="735" y="695" width="66" height="2" fill="#8fc8f0"/>
 <rect x="808" y="695" width="66" height="2" fill="#8fc8f0"/>
 <rect x="882" y="695" width="66" height="2" fill="#8fc8f0"/>
 <!-- chrome -->
 <circle cx="263" cy="679" r="10" fill="#db4437"/><path d="M263 679 L254.3 684 A10 10 0 0 0 268 687.7Z" fill="#0f9d58"/><path d="M263 679 L268 687.7 A10 10 0 0 0 272.7 676.5 L263 676.5Z" fill="#f4c20d"/><circle cx="263" cy="679" r="4.5" fill="#fff"/><circle cx="263" cy="679" r="3.5" fill="#4285f4"/>
 <!-- ps -->
 <rect x="328" y="669" width="20" height="19" fill="#0d3a66"/><rect x="329" y="670" width="18" height="17" fill="#1b5fa6"/><text x="330" y="684" font-family="Liberation Sans" font-weight="bold" font-size="12" fill="#8fd0ff">Ps</text>
 <!-- ai -->
 <rect x="402" y="669" width="19" height="19" fill="#2d1a00" stroke="#f7941e" stroke-width="1.5"/><text x="404.5" y="683.5" font-family="Liberation Sans" font-weight="bold" font-size="11.5" fill="#f7941e">Ai</text>
 <!-- file -->
 <path d="M481 669 L491 669 L495 673 L495 688 L481 688Z" fill="#f2f2f2"/>
 <!-- lr -->
 <rect x="517.5" y="669.5" width="18" height="18" fill="#0a1a24" stroke="#9ecbe8" stroke-width="1"/><text x="520" y="683" font-family="Liberation Sans" font-weight="bold" font-size="10.5" fill="#9ecbe8">Lr</text>
 <!-- camera -->
 <path d="M553 673 L559 673 L561 670 L567 670 L569 673 L574 673 L574 688 L553 688Z" fill="#aaa"/><circle cx="563.5" cy="680" r="5" fill="#ddd" stroke="#888"/>
 <!-- twitter -->
 <path d="M590 684 Q596 687 601 684 Q608 680 607 673 L610 670 L606.5 671 L608 668 L605 669.5 Q601 666 597.5 670 Q596.5 672 597 674 Q592 674 590.5 670 Q589.5 674 592 676 L590.5 676 Q591 679 594 680 L592 680 Q593 683 596 683 Q593 684.5 590 684Z" fill="#1da1f2"/>
 <!-- folder -->
 <path d="M628 671 L635 671 L637 673 L647 673 L647 688 L628 688Z" fill="#f7d774"/><rect x="628" y="676" width="19" height="12" fill="#f2c54c"/><rect x="634" y="681" width="7" height="5" fill="#1e90e0"/>
 <!-- utorrent -->
 <circle cx="675.5" cy="679" r="11" fill="#77bb44"/><path d="M670 673 L670 682 Q670 686 675 686 Q680 686 680 682 L680 673 L677.5 673 L677.5 682 Q677.5 684 675 684 Q672.5 684 672.5 682 L672.5 673Z" fill="#fff"/>
 <!-- ai2 -->
 <rect x="702.5" y="669.5" width="19" height="19" fill="#1c0f00" stroke="#f7941e" stroke-width="1.3"/><text x="705" y="684" font-family="Liberation Sans" font-weight="bold" font-size="11.5" fill="#f7941e">Ai</text>
 <!-- connectify -->
 <circle cx="821" cy="679" r="11" fill="#ccc"/><circle cx="821" cy="679" r="9" fill="#555"/><path d="M814 680 Q821 672 828 680 M816 683 Q821 677 826 683" fill="none" stroke="#4db8ff" stroke-width="1.8"/>
 <!-- tray -->
 <path d="M963 682 L968.5 676.5 L974 682" fill="none" stroke="#fff" stroke-width="1.3"/>
 <path d="M992 674 L995 672 L998 674 L995 676Z M998 674 L1001 672 L1004 674 L1001 676Z M992 678 L995 676 L998 678 L995 680Z M998 678 L1001 676 L1004 678 L1001 680Z" fill="#fff"/><circle cx="1002" cy="684" r="3.5" fill="#2fb56b"/>
 <rect x="1020" y="673" width="13" height="10" fill="none" stroke="#fff" stroke-width="1.2"/><path d="M1022 686h9M1026.5 683v3" stroke="#fff" stroke-width="1.2"/>
 <path d="M1050 676 L1053 676 L1056 673 L1056 685 L1053 682 L1050 682Z" fill="none" stroke="#fff" stroke-width="1.2"/><path d="M1059 676l5 5M1064 676l-5 5" stroke="#fff" stroke-width="1.2"/>
 <rect x="1078" y="677" width="13" height="7" fill="none" stroke="#fff" stroke-width="1.2"/><rect x="1080" y="679" width="9" height="3" fill="#fff"/><path d="M1082 675h3" stroke="#fff"/>
 <path d="M1107 672 L1121 672 L1121 683 L1114 683 L1111 686 L1111 683 L1107 683Z" fill="none" stroke="#fff" stroke-width="1.2"/><path d="M1110 675.5h8M1110 678.5h8" stroke="#fff" stroke-width="1"/>
 <rect x="1136" y="673" width="19" height="11" rx="1" fill="none" stroke="#fff" stroke-width="1.2"/><path d="M1139 676.5h13M1139 679.5h13M1141 682h9" stroke="#fff" stroke-width="1" stroke-dasharray="1.5 1"/>
</svg>
 <div class="t" style="left:278px;top:11px;font-size:10.5px;color:#fff">User ...</div>
 <div class="t" style="left:352px;top:11px;font-size:10.5px;color:#fff">Untitl...</div>
 <div class="t" style="left:426px;top:11px;font-size:10.5px;color:#fff">solda...</div>
 <div class="t" style="left:836px;top:11px;font-size:10.5px;color:#fff">Conn...</div>
 <div class="t" style="left:1176px;top:3px;font-size:10.4px;color:#fff">6:50 p. m.</div>
 <div class="t" style="left:1173px;top:19px;font-size:10.6px;color:#fff">20/12/2015</div>
</div>
</body></html>
